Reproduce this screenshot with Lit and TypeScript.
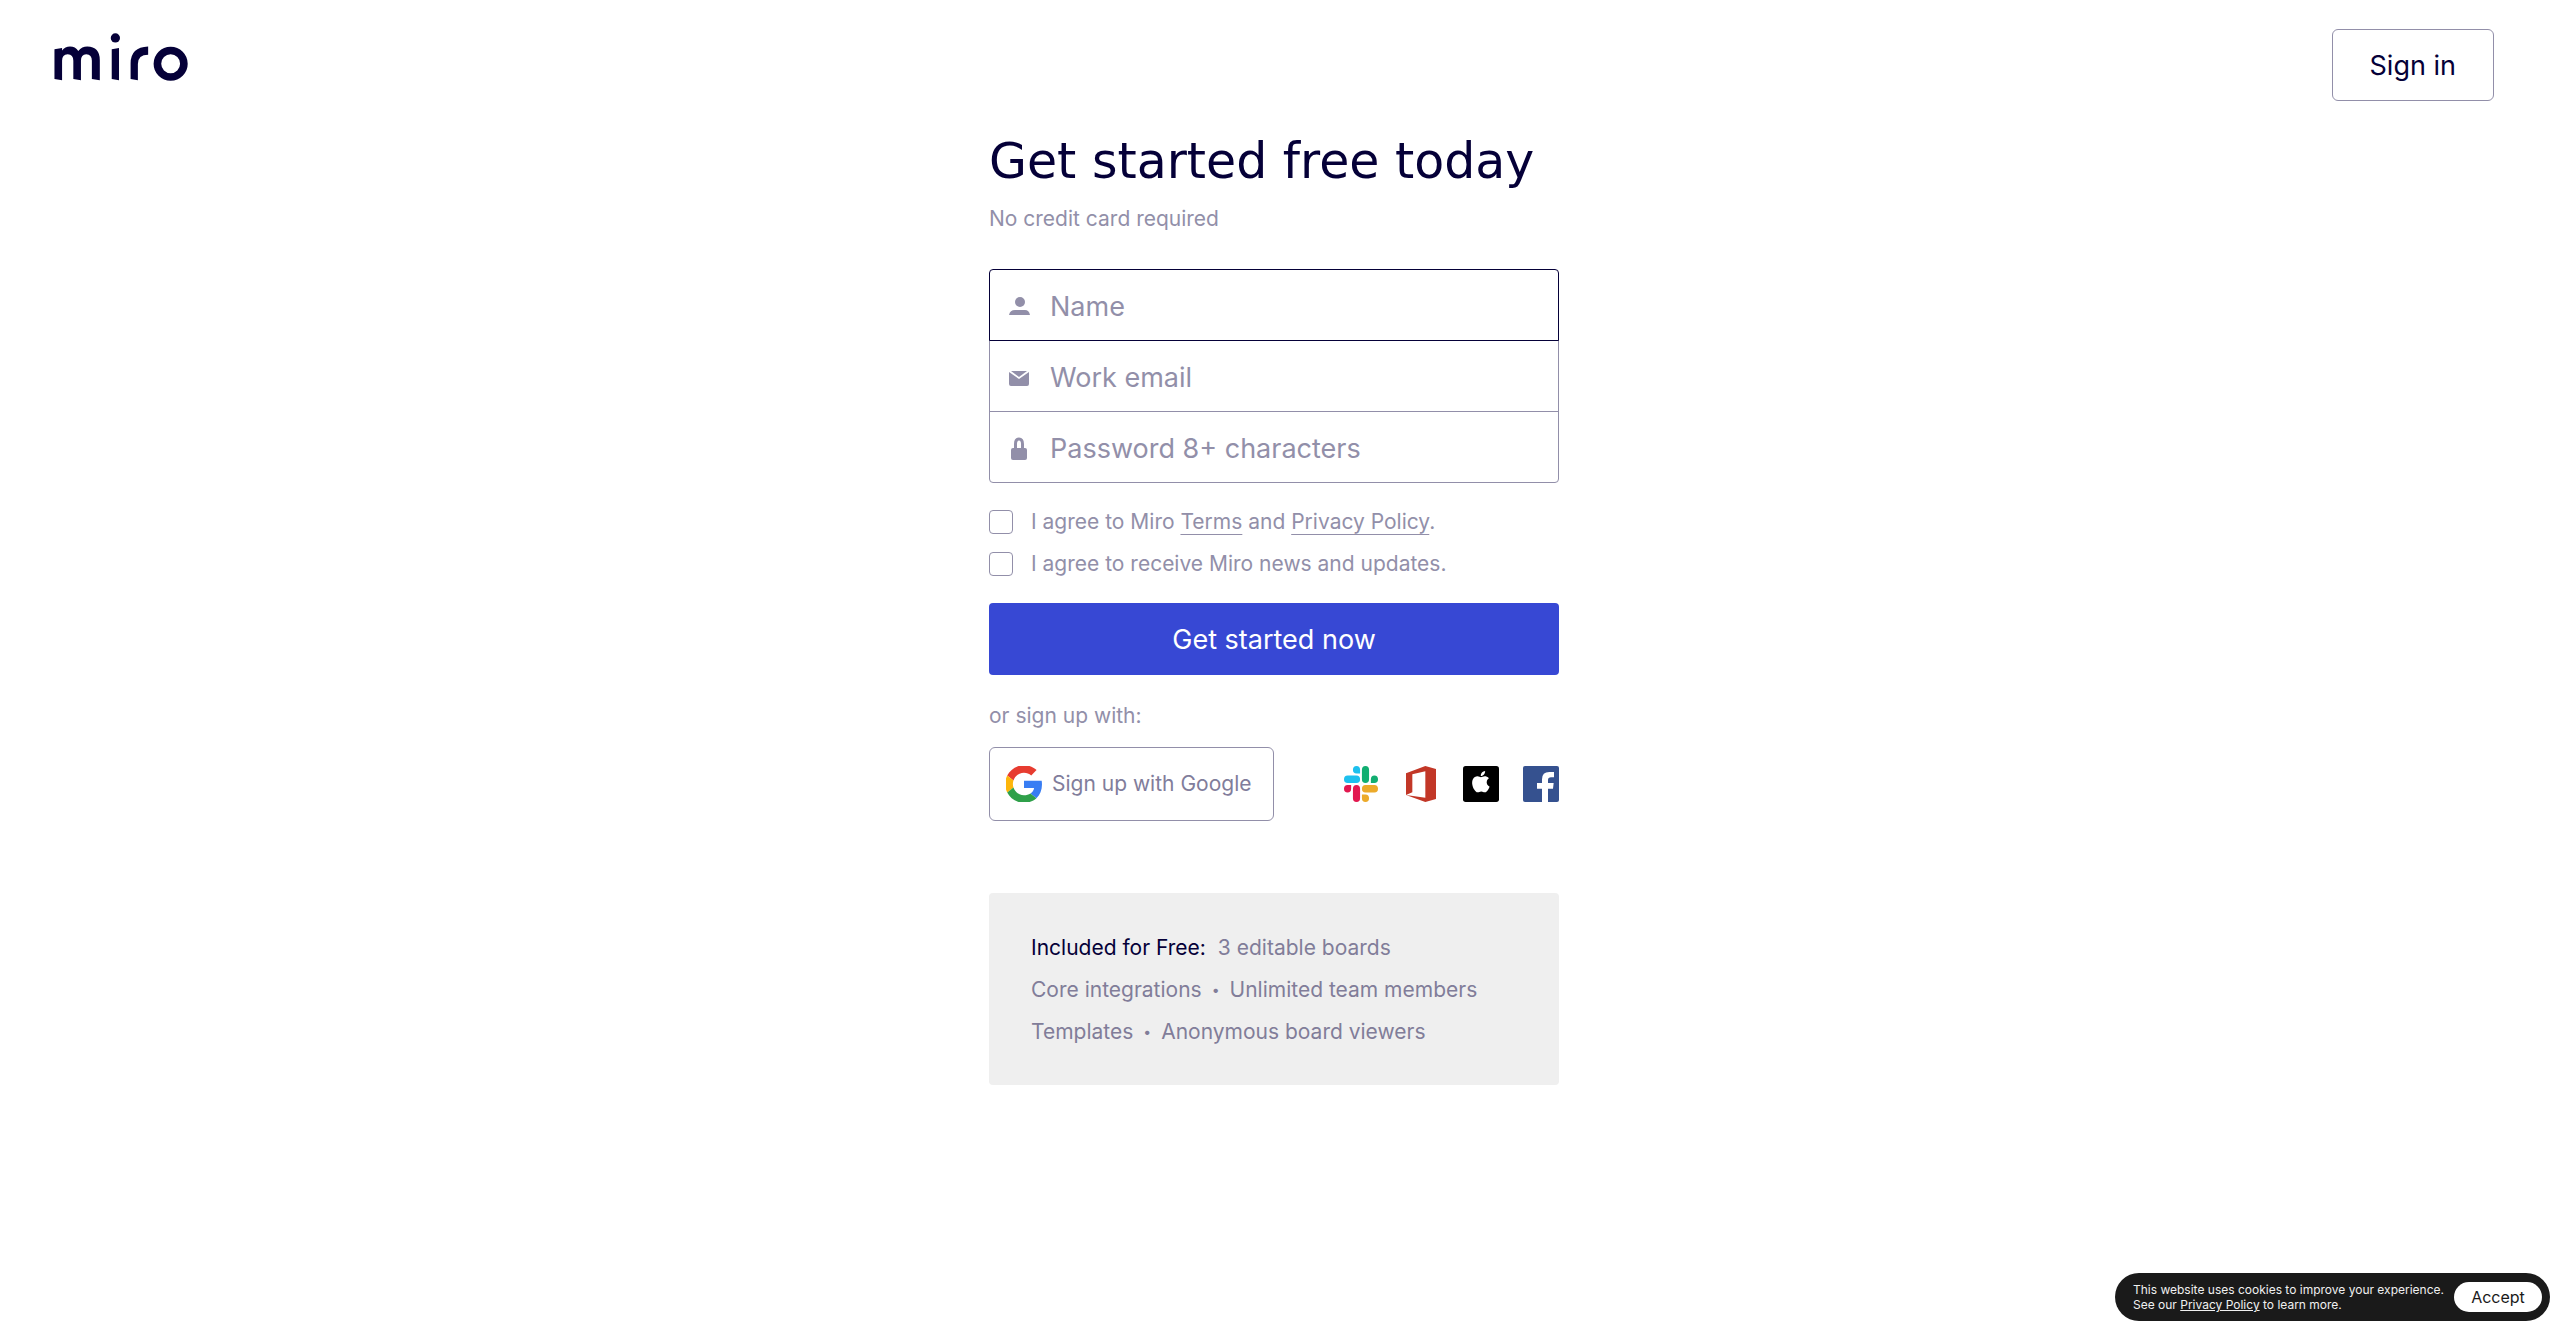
import { LitElement, html, css, svg } from "lit";
import { customElement } from "lit/decorators.js";

const logo = html`<svg class="logo-mark" viewBox="0 0 402 145" aria-hidden="true">
  <path d="M0 49L23 45V53Q32 41 47 41Q63 41 72 54Q83 41 99 41Q137 42 137 82V143L113 139V84Q113 64 96 64Q80 64 80 84V143L57 139V84Q57 64 40 64Q23 64 23 84V143L0 139Z" />
  <path d="M173 49L195 45V143L173 139Z" />
  <circle cx="184" cy="15" r="14" />
  <path d="M230 139V92Q230 43 283 41V66Q252 66 252 94V143Z" />
  <circle class="ring" cx="351" cy="93" r="40" />
</svg>`;

const personIcon = svg`<circle cx="12" cy="9" r="5" /><path d="M1 22Q2 17 7 17H17Q21 17 22 22Z" />`;
const mailIcon = svg`<path d="M1 8V20Q1 22 3 22H19Q21 22 21 20V8L11 15Z" /><path d="M3 7H19L11 13Z" />`;
const lockIcon = svg`<path class="shackle" d="M7.500 14V9Q7.500 4 11 4Q14.500 4 14.500 9V14" /><rect x="3" y="13" width="16" height="12" rx="2" />`;

const googleIcon = html`<svg class="brand" viewBox="1 1 46 46" aria-hidden="true">
  <path fill="#e73c30" d="M24 9.5c3.54 0 6.71 1.22 9.21 3.6l6.85-6.85C35.9 2.38 30.47 0 24 0 14.62 0 6.51 5.38 2.56 13.22l7.98 6.19C12.43 13.72 17.74 9.5 24 9.5z" />
  <path fill="#387df3" d="M46.98 24.55c0-1.57-.15-3.09-.38-4.55H24v9.02h12.94c-.58 2.96-2.26 5.48-4.78 7.18l7.73 6c4.51-4.18 7.09-10.36 7.09-17.65z" />
  <path fill="#fdb60b" d="M10.53 28.59c-.48-1.45-.76-2.99-.76-4.59s.27-3.14.76-4.59l-7.98-6.19C.92 16.46 0 20.12 0 24c0 3.88.92 7.54 2.56 10.78l7.97-6.19z" />
  <path fill="#2fa04a" d="M24 48c6.48 0 11.93-2.13 15.89-5.81l-7.73-6c-2.15 1.45-4.92 2.3-8.16 2.3-6.26 0-11.57-4.22-13.47-9.91l-7.98 6.19C6.51 42.62 14.62 48 24 48z" />
</svg>`;

const slackIcon = html`<svg class="brand" viewBox="-0.7 0 25.4 24" preserveAspectRatio="none" aria-hidden="true">
  <path fill="#e2184f" d="M5.042 15.165a2.528 2.528 0 0 1-2.52 2.523A2.528 2.528 0 0 1 0 15.165a2.527 2.527 0 0 1 2.522-2.52h2.52v2.52zM6.313 15.165a2.527 2.527 0 0 1 2.521-2.52 2.527 2.527 0 0 1 2.521 2.52v6.313A2.528 2.528 0 0 1 8.834 24a2.528 2.528 0 0 1-2.521-2.522v-6.313z" />
  <path fill="#1dc0ee" d="M8.834 5.042a2.528 2.528 0 0 1-2.521-2.52A2.528 2.528 0 0 1 8.834 0a2.528 2.528 0 0 1 2.521 2.522v2.52H8.834zM8.834 6.313a2.528 2.528 0 0 1 2.521 2.521 2.528 2.528 0 0 1-2.521 2.521H2.522A2.528 2.528 0 0 1 0 8.834a2.528 2.528 0 0 1 2.522-2.521h6.312z" />
  <path fill="#11ae71" d="M18.956 8.834a2.528 2.528 0 0 1 2.522-2.521A2.528 2.528 0 0 1 24 8.834a2.528 2.528 0 0 1-2.522 2.521h-2.522V8.834zM17.688 8.834a2.528 2.528 0 0 1-2.523 2.521 2.527 2.527 0 0 1-2.52-2.521V2.522A2.527 2.527 0 0 1 15.165 0a2.528 2.528 0 0 1 2.523 2.522v6.312z" />
  <path fill="#ecaa2a" d="M15.165 18.956a2.528 2.528 0 0 1 2.523 2.522A2.528 2.528 0 0 1 15.165 24a2.527 2.527 0 0 1-2.52-2.522v-2.522h2.52zM15.165 17.688a2.527 2.527 0 0 1-2.52-2.523 2.526 2.526 0 0 1 2.52-2.52h6.313A2.527 2.527 0 0 1 24 15.165a2.528 2.528 0 0 1-2.522 2.523h-6.313z" />
</svg>`;

const officeIcon = html`<svg class="brand" viewBox="0 0 108 108" aria-hidden="true">
  <path fill="#c23727" d="M9 22L67 0L99 9V99L67 108L9 87L67 95V16L28 25V79L9 87Z" />
</svg>`;

const appleIcon = html`<svg class="brand" viewBox="0 0 108 108" aria-hidden="true">
  <rect width="108" height="108" rx="8" />
  <path fill="#fff" transform="translate(21.5 15) scale(2.67)" d="M12.152 6.896c-.948 0-2.415-1.078-3.96-1.04-2.04.027-3.91 1.183-4.961 3.014-2.117 3.675-.546 9.103 1.519 12.09 1.013 1.454 2.208 3.09 3.792 3.039 1.52-.065 2.09-.987 3.935-.987 1.831 0 2.35.987 3.96.948 1.637-.026 2.676-1.48 3.676-2.948 1.156-1.688 1.636-3.325 1.662-3.415-.039-.013-3.182-1.221-3.22-4.857-.026-3.04 2.48-4.494 2.597-4.559-1.429-2.09-3.623-2.324-4.39-2.376-2-.156-3.675 1.09-4.61 1.09zM15.53 3.83c.843-1.012 1.4-2.427 1.245-3.83-1.207.052-2.662.805-3.532 1.818-.78.896-1.454 2.338-1.273 3.714 1.338.104 2.715-.688 3.559-1.701z" />
</svg>`;

const facebookIcon = html`<svg class="brand" viewBox="0 0 108 108" aria-hidden="true">
  <rect fill="#35518f" width="108" height="108" rx="6" />
  <path fill="#fff" d="M57 108V68H42V51H57V40Q57 18 79 18H93V34H84Q75 34 75 42V51H92L90 68H75V108Z" />
</svg>`;

const fields = [
  { id: "name", type: "text", label: "Name", icon: personIcon, active: true },
  { id: "email", type: "email", label: "Work email", icon: mailIcon, active: false },
  { id: "password", type: "password", label: "Password 8+ characters", icon: lockIcon, active: false },
];

const providers = [
  { name: "Slack", icon: slackIcon },
  { name: "Office 365", icon: officeIcon },
  { name: "Apple", icon: appleIcon },
  { name: "Facebook", icon: facebookIcon },
];

@customElement("app-root")
export class AppRoot extends LitElement {
  static styles = css`
    :host {
      --ink: #050038;
      --muted: #928fa9;
      --line: #928fa9;
      display: block;
      min-height: 100vh;
      box-sizing: border-box;
      padding-right: 5px;
      background: #fff;
      color: var(--muted);
      font: 21px/30px Inter, "Liberation Sans", sans-serif;
    }
    * { box-sizing: border-box; }
    a { color: inherit; }
    button { font: inherit; cursor: pointer; }
    .header {
      display: flex;
      justify-content: space-between;
      align-items: flex-start;
      padding: 29px 54px 0;
    }
    .logo { display: block; padding-top: 4px; }
    .logo-mark { display: block; width: 134px; height: 48px; fill: var(--ink); }
    .ring { fill: none; stroke: var(--ink); stroke-width: 23; }
    .sign-in {
      display: flex;
      align-items: center;
      height: 72px;
      padding: 2px 37px 0;
      border: 1px solid var(--line);
      border-radius: 6px;
      color: var(--ink);
      font-size: 27px;
      text-decoration: none;
    }
    .main {
      width: 570px;
      max-width: 100%;
      margin: 31px auto 0;
    }
    .title {
      margin: 0;
      color: var(--ink);
      font: 400 49px/60px "DejaVu Sans", sans-serif;
      white-space: nowrap;
    }
    .subtitle { margin: 12px 0 35px; }
    .field {
      display: flex;
      align-items: center;
      gap: 18px;
      height: 72px;
      padding: 0 20px 0 18px;
      border: 1px solid var(--line);
    }
    .field + .field { margin-top: -1px; }
    .field:first-child { border-radius: 4px 4px 0 0; }
    .field:last-child { border-radius: 0 0 4px 4px; }
    .field.active { position: relative; z-index: 1; border-color: var(--ink); }
    .field-icon { flex: none; width: 24px; height: 24px; overflow: visible; fill: var(--line); }
    .shackle { fill: none; stroke: var(--line); stroke-width: 3; }
    .input {
      flex: 1;
      min-width: 0;
      height: 100%;
      padding: 2px 0 0;
      border: 0;
      outline: 0;
      background: none;
      color: var(--ink);
      font: inherit;
      font-size: 27px;
    }
    .input::placeholder { color: var(--muted); opacity: 1; }
    .checks { margin: 18px 0; }
    .check { display: flex; align-items: center; gap: 18px; height: 42px; }
    .box {
      appearance: none;
      flex: none;
      width: 24px;
      height: 24px;
      margin: 0;
      border: 1px solid var(--line);
      border-radius: 4px;
    }
    .box:checked { background: var(--ink); }
    .term {
      text-decoration: underline;
      text-decoration-thickness: 1px;
      text-underline-offset: 5px;
      text-decoration-skip-ink: none;
    }
    .submit {
      display: block;
      width: 100%;
      height: 72px;
      padding: 2px 0 0;
      border: 0;
      border-radius: 4px;
      background: #3748d4;
      color: #fff;
      font-size: 27px;
    }
    .alt { margin: 26px 0 16px; }
    .social { display: flex; align-items: center; justify-content: space-between; }
    .google {
      display: flex;
      align-items: center;
      gap: 10px;
      width: 50%;
      height: 74px;
      padding: 0 16px;
      border: 1px solid var(--line);
      border-radius: 6px;
      background: #fff;
      color: #817d9b;
      white-space: nowrap;
    }
    .providers { display: flex; gap: 24px; }
    .provider { display: block; padding: 0; border: 0; background: none; }
    .brand { display: block; flex: none; width: 36px; height: 36px; }
    .plan {
      margin-top: 72px;
      padding: 34px 42px 32px;
      border-radius: 4px;
      background: #efefef;
      color: #817d99;
      line-height: 42px;
    }
    .plan-line { margin: 0; display: flex; gap: 12px; white-space: nowrap; }
    .plan-line.dotted { gap: 10px; }
    .plan-name { color: var(--ink); }
    .dot { font-size: 14px; }
    .cookies {
      position: fixed;
      right: 3px;
      bottom: 4px;
      display: flex;
      align-items: center;
      gap: 10px;
      height: 48px;
      padding: 0 8px 0 18px;
      border-radius: 24px;
      background: #1a1a1a;
      color: #f0f0f0;
      font-size: 12px;
      line-height: 15px;
      white-space: nowrap;
    }
    .cookies-text { margin: 0; }
    .accept {
      width: 88px;
      height: 30px;
      padding: 0;
      border: 0;
      border-radius: 15px;
      background: #fff;
      color: #1a1a1a;
      font-size: 16px;
    }
  `;

  render() {
    return html`
      <header class="header">
        <a class="logo" href="#" aria-label="Miro">${logo}</a>
        <a class="sign-in" href="#">Sign in</a>
      </header>
      <main class="main">
        <h1 class="title">Get started free today</h1>
        <p class="subtitle">No credit card required</p>
        <form @submit=${(e: Event) => e.preventDefault()}>
          <div class="fields">
            ${fields.map(
              (f) => html`<label class="field ${f.active ? "active" : ""}" for=${f.id}>
                <svg class="field-icon" viewBox="0 0 24 24" aria-hidden="true">${f.icon}</svg>
                <input class="input" id=${f.id} type=${f.type} placeholder=${f.label} aria-label=${f.label} />
              </label>`
            )}
          </div>
          <div class="checks">
            <div class="check">
              <input class="box" type="checkbox" id="terms" />
              <label for="terms">I agree to Miro <a class="term" href="#">Terms</a> and <a class="term" href="#">Privacy Policy</a>.</label>
            </div>
            <div class="check">
              <input class="box" type="checkbox" id="news" />
              <label for="news">I agree to receive Miro news and updates.</label>
            </div>
          </div>
          <button class="submit" type="submit">Get started now</button>
        </form>
        <p class="alt">or sign up with:</p>
        <div class="social">
          <button class="google" type="button">${googleIcon}<span>Sign up with Google</span></button>
          <div class="providers">
            ${providers.map((p) => html`<button class="provider" type="button" aria-label=${p.name}>${p.icon}</button>`)}
          </div>
        </div>
        <section class="plan">
          <p class="plan-line"><span class="plan-name">Included for Free:</span><span>3 editable boards</span></p>
          <p class="plan-line dotted"><span>Core integrations</span><span class="dot">•</span><span>Unlimited team members</span></p>
          <p class="plan-line dotted"><span>Templates</span><span class="dot">•</span><span>Anonymous board viewers</span></p>
        </section>
      </main>
      <aside class="cookies">
        <p class="cookies-text">This website uses cookies to improve your experience.<br />See our <a href="#">Privacy Policy</a> to learn more.</p>
        <button class="accept" type="button">Accept</button>
      </aside>
    `;
  }
}
